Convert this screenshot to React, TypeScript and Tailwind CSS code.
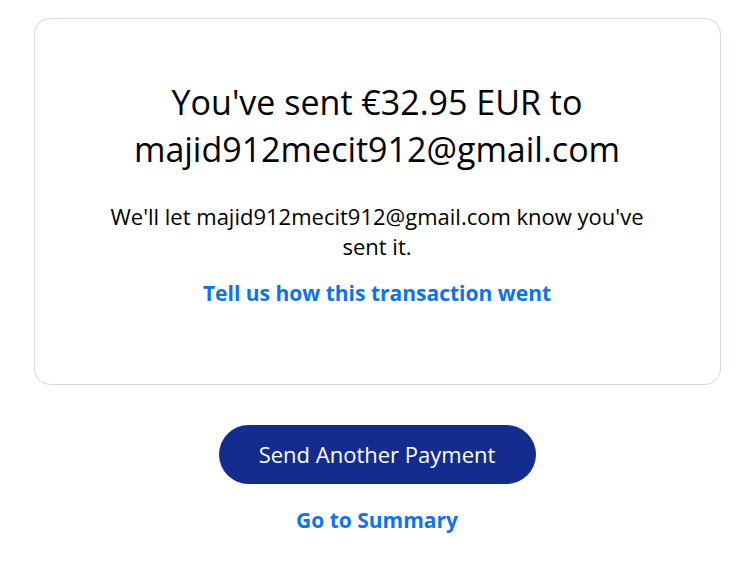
export default function App() {
  return (
    <div className="min-h-screen bg-white flex flex-col items-center pt-[18px] font-['Open_Sans','Lato',sans-serif] text-black">
      <div className="w-[687px] rounded-2xl border border-[#dcd9ce] flex flex-col items-center pt-[60px] pb-[76px] px-10">
        <h1 className="text-[34px] leading-[47px] text-center max-w-[540px]">
          You've sent €32.95 EUR to majid912mecit912@gmail.com
        </h1>
        <p className="mt-[28px] text-[22px] leading-[30px] text-center max-w-[560px]">
          We'll let majid912mecit912@gmail.com know you've sent it.
        </p>
        <a href="#" className="mt-[17px] text-[21px] leading-[30px] font-bold text-[#1072eb]">
          Tell us how this transaction went
        </a>
      </div>
      <button className="mt-[40px] w-[317px] h-[59px] rounded-full bg-[#142c8e] text-white text-[22px]">
        Send Another Payment
      </button>
      <a href="#" className="mt-[21px] text-[21px] leading-[30px] font-bold text-[#1072eb]">
        Go to Summary
      </a>
    </div>
  );
}
